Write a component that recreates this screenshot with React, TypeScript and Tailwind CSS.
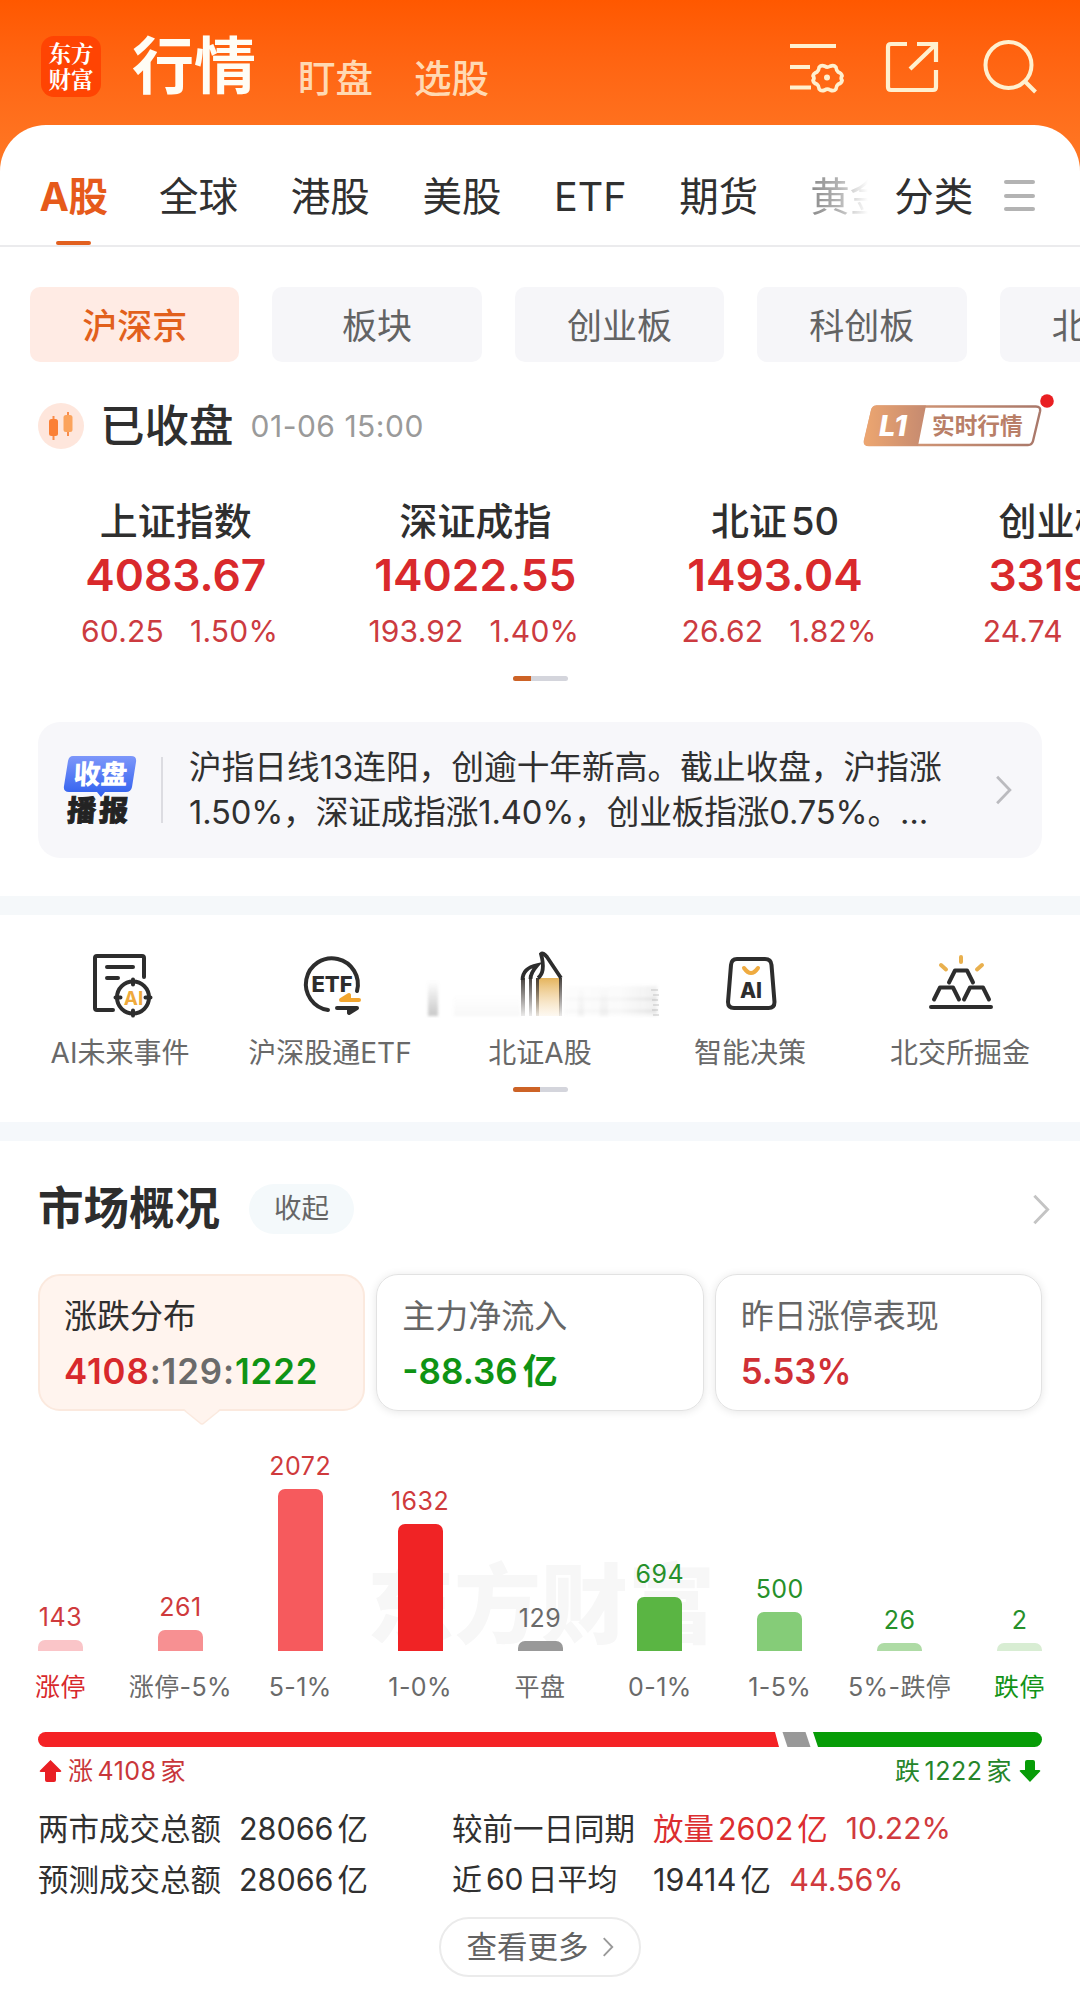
import React from 'react';

interface IndexQuote {
  name: React.ReactNode;
  price: string;
  change: string;
  percent: string;
}

interface DistributionBar {
  label: string;
  value: number;
  height: number;
  bar: string;
  text: string;
  labelText: string;
}

const tabs = ['全球', '港股', '美股', 'ETF', '期货'];
const boards = ['沪深京', '板块', '创业板', '科创板', '北交所'];

const quotes: IndexQuote[] = [
  { name: '上证指数', price: '4083.67', change: '60.25', percent: '1.50%' },
  { name: '深证成指', price: '14022.55', change: '193.92', percent: '1.40%' },
  {
    name: (
      <>
        北证<span className="ml-1">50</span>
      </>
    ),
    price: '1493.04',
    change: '26.62',
    percent: '1.82%',
  },
  { name: '创业板指', price: '3319.29', change: '24.74', percent: '0.75%' },
];

const distribution: DistributionBar[] = [
  { label: '涨停', value: 143, height: 11, bar: 'bg-[#fac5c8]', text: 'text-[#cf3a3c]', labelText: 'text-[#d8282c]' },
  { label: '涨停-5%', value: 261, height: 21, bar: 'bg-[#f79092]', text: 'text-[#cf3a3c]', labelText: 'text-[#6a6a6a]' },
  { label: '5-1%', value: 2072, height: 162, bar: 'bg-[#f65a5d]', text: 'text-[#cf3a3c]', labelText: 'text-[#6a6a6a]' },
  { label: '1-0%', value: 1632, height: 127, bar: 'bg-[#f02325]', text: 'text-[#cf3a3c]', labelText: 'text-[#6a6a6a]' },
  { label: '平盘', value: 129, height: 10, bar: 'bg-[#999999]', text: 'text-[#6a6a6a]', labelText: 'text-[#6a6a6a]' },
  { label: '0-1%', value: 694, height: 54, bar: 'bg-[#5ab543]', text: 'text-[#26902a]', labelText: 'text-[#6a6a6a]' },
  { label: '1-5%', value: 500, height: 39, bar: 'bg-[#85cc78]', text: 'text-[#26902a]', labelText: 'text-[#6a6a6a]' },
  { label: '5%-跌停', value: 26, height: 8, bar: 'bg-[#aedba5]', text: 'text-[#26902a]', labelText: 'text-[#6a6a6a]' },
  { label: '跌停', value: 2, height: 8, bar: 'bg-[#d8edd3]', text: 'text-[#26902a]', labelText: 'text-[#129317]' },
];

function Chevron({ className }: { className: string }) {
  return (
    <svg className={className} viewBox="0 0 16 28" fill="none" stroke="currentColor" strokeWidth="2.6">
      <path d="M2 1.5 14 14 2 26.5" />
    </svg>
  );
}

function Header() {
  return (
    <header className="flex h-[125px] items-start">
      <div className="ml-[41px] mt-9 flex h-[61px] w-[60px] flex-col items-center rounded-[13px] bg-[#ff4403] pt-[3px] font-['Noto_Serif_CJK_SC','Noto_Sans_CJK_SC',sans-serif] text-[22.500px] font-bold leading-[26px] text-white">
        <span>东方</span>
        <span>财富</span>
      </div>
      <h1 className="ml-[31px] mt-[33px] text-[62px] font-bold leading-[68px] text-[#fffdf5]">行情</h1>
      <span className="ml-[42px] mt-[55px] text-[37.500px] font-medium leading-[48px] text-[#ffd9b3]">盯盘</span>
      <span className="ml-[41px] mt-[55px] text-[37.500px] font-medium leading-[48px] text-[#ffd9b3]">选股</span>
      <div className="ml-auto mr-[42px] mt-[38px] flex">
        <svg className="mr-[40px] h-14 w-14" viewBox="0 0 56 56" fill="none" stroke="#fff0cf" strokeWidth="4">
          <path d="M2 8h46M2 29h20M2 49.500h21" />
          <path
            strokeWidth="4.200"
            strokeLinejoin="round"
            d="M34 27q2.500 2 6 0 4-2 6.500 1 .500 4 2.500 5.500 4 1.500 4.500 4.500-2 2.500 0 5-.500 3-4.500 4.500-2 1.500-2.500 5.500-2.500 3-6.500 1-3.500-2-6 0-4 2-6.500-1-.500-4-2.500-5.500-4-1.500-4.500-4.500 2-2.500 0-5 .500-3 4.500-4.500 2-1.500 2.500-5.500 2.500-3 6.500-1z"
            transform="translate(7 4.500) scale(.88)"
          />
          <circle cx="39" cy="39.500" r="3" fill="#fff0cf" stroke="none" />
        </svg>
        <svg className="mr-[42px] h-14 w-[56px]" viewBox="0 0 56 56" fill="none" stroke="#fff0cf" strokeWidth="4.200">
          <path d="M23 6H7q-3 0-3 3v40q0 3 3 3h42q3 0 3-3V32" />
          <path d="M33 6h19v18M51 7 26 31" />
        </svg>
        <svg className="h-14 w-14" viewBox="0 0 56 56" fill="none" stroke="#fff0cf" strokeWidth="4">
          <circle cx="26.500" cy="27" r="23" />
          <path d="m42.500 43 11 11" />
        </svg>
      </div>
    </header>
  );
}

function MarketTabs() {
  return (
    <nav className="flex h-[122px] border-b-2 border-[#ebebed] text-[39.500px] leading-[52px] text-[#303030]">
      <div className="ml-[39px] mt-[46px] flex w-[69px] flex-col items-center font-bold text-[#e65a1b]">
        <span className="text-[39.500px] tracking-[-0.500px]">A股</span>
        <span className="mt-[18px] h-[6px] w-[35px] rounded-full bg-[#e2601f]" />
      </div>
      <div className="ml-[51px] mt-[46px] flex gap-[52.700px]">
        {tabs.map((tab) => (
          <span key={tab}>{tab}</span>
        ))}
      </div>
      <div className="ml-[52px] mt-[46px] w-[58px] overflow-hidden whitespace-nowrap bg-linear-to-r from-[#8a8a8a] via-[#b4b4b4] to-white bg-clip-text text-transparent">
        黄金
      </div>
      <span className="ml-[26px] mt-[46px]">分类</span>
      <div className="ml-[31px] mt-[55px] flex flex-col gap-[9.500px]">
        <i className="h-[4px] w-[31px] rounded-full bg-[#b3b3b3]" />
        <i className="h-[4px] w-[31px] rounded-full bg-[#b3b3b3]" />
        <i className="h-[4px] w-[31px] rounded-full bg-[#b3b3b3]" />
      </div>
    </nav>
  );
}

function StatusRow() {
  return (
    <div className="mt-[35px] flex h-[58px] items-center">
      <svg className="ml-[38px] h-[46px] w-[46px]" viewBox="0 0 46 46">
        <circle cx="23" cy="23" r="23" fill="#fee6dc" />
        <path d="M15.500 13v24M30 9v24" stroke="#f98c4a" strokeWidth="2" />
        <rect x="11" y="16" width="9" height="17" rx="2.500" fill="#fb8035" />
        <rect x="25.500" y="12" width="9" height="17" rx="2.500" fill="#fba35c" />
      </svg>
      <h2 className="ml-[16px] text-[44.500px] font-medium leading-[58px] text-[#2f2f2f]">已收盘</h2>
      <span className="ml-[17px] text-[30px] tracking-[0.500px] text-[#9a9a9a]">01-06 15:00</span>
      <svg className="ml-auto mr-[24px] h-[58px] w-[200px] overflow-visible" viewBox="-6 0 200 58">
        <defs>
          <linearGradient id="l1" x1="0" x2="1">
            <stop offset="0" stopColor="#eda670" />
            <stop offset="1" stopColor="#c58a70" />
          </linearGradient>
          <linearGradient id="l1line" x1="0" x2="1">
            <stop offset="0" stopColor="#e0a078" />
            <stop offset="1" stopColor="#a9786a" />
          </linearGradient>
        </defs>
        <path d="M14 9.500H174q5 0 4 5L171 44q-1 4-5 4H7q-5 0-4-4.500L10 14q1-4.500 5-4.500Z" fill="#fff" stroke="url(#l1line)" strokeWidth="2.400" />
        <path d="M15 8.500H64L56 49H7q-6 0-5-5L9 13q1-4.500 6-4.500Z" fill="url(#l1)" />
        <text x="17" y="39" fontSize="29" fontWeight="800" fontStyle="italic" fill="#fff">
          L1
        </text>
        <text x="70" y="37" fontSize="22.700" fontWeight="700" fill="#b97f68">
          实时行情
        </text>
        <circle cx="185" cy="4" r="6.800" fill="#e91f22" />
      </svg>
    </div>
  );
}

function Pager({ active }: { active: string }) {
  return (
    <div className="mx-auto h-[5px] w-[55px] overflow-hidden rounded-full bg-[#d4d5dc]">
      <div className={`h-full bg-[#cd6326] ${active}`} />
    </div>
  );
}

function Quotes() {
  return (
    <div className="mt-[39px] flex pl-[26px]">
      {quotes.map((q) => (
        <div key={q.price} className="flex w-[299.600px] shrink-0 flex-col items-center whitespace-nowrap">
          <span className="text-[38px] font-medium leading-[54px] text-[#2f2f2f]">{q.name}</span>
          <span className="text-[44.300px] font-semibold leading-[54px] text-[#d9292c]">{q.price}</span>
          <div className="mt-[3px] flex w-full gap-[26px] text-[30px] leading-[52px] tracking-[0.200px] text-[#cc3b40]">
            <span className="w-[138px] text-right">{q.change}</span>
            <span>{q.percent}</span>
          </div>
        </div>
      ))}
    </div>
  );
}

function NewsCard() {
  return (
    <div className="mx-[38px] mt-[41px] flex h-[136px] items-center rounded-[22px] bg-[#f7f7fa]">
      <svg className="ml-[24px] h-[72px] w-[78px]" viewBox="0 0 78 72">
        <defs>
          <linearGradient id="news" x1="0" y1="0" x2="0" y2="1">
            <stop offset="0" stopColor="#7d97fa" />
            <stop offset="1" stopColor="#2f5fee" />
          </linearGradient>
        </defs>
        <path d="M11 2H69q6 0 5 6l-4 25q-1 5-6 5H43l-4 5-4-5H7q-6 0-5-6L6 7q1-5 5-5Z" fill="url(#news)" />
        <g fontWeight="900" textAnchor="middle">
          <text transform="translate(38 30) skewX(-3)" fontSize="27" fill="#fff">
            收盘
          </text>
          <text transform="translate(36.500 66.500) skewX(-4)" fontSize="29" letterSpacing="3" fill="#232323" stroke="#232323" strokeWidth="0.800">
            播报
          </text>
        </g>
      </svg>
      <div className="ml-[21px] h-[66px] w-[2px] bg-[#dcdce1]" />
      <p className="ml-[26px] whitespace-nowrap text-[32.700px] leading-[45px] text-[#303030]">
        沪指日线13连阳，创逾十年新高。截止收盘，沪指涨
        <br />
        <span className="tracking-[-0.150px]">1.50%，深证成指涨1.40%，创业板指涨0.75%。…</span>
      </p>
      <Chevron className="ml-auto mr-[30px] h-[30px] w-[17px] text-[#bbbbbf]" />
    </div>
  );
}

function EventIcon() {
  return (
    <svg className="h-[68px] w-[68px]" viewBox="0 0 68 68" fill="none" stroke="#2d2d2d" strokeWidth="4" strokeLinecap="round" strokeLinejoin="round">
      <path d="M27 60H11q-2 0-2-2V8q0-2 2-2h45q2 0 2 2v19M21 17h26M21 28h11" />
      <circle cx="47" cy="47.500" r="16" />
      <path d="M47 29.500v5M47 60.500v5M29.500 47.500h5M59.500 47.500h5" />
      <text x="47.500" y="54.500" textAnchor="middle" fontSize="19" fontWeight="700" fill="#efaa3c" stroke="none">
        AI
      </text>
    </svg>
  );
}

function EtfIcon() {
  return (
    <svg className="h-[68px] w-[68px]" viewBox="0 0 68 68" fill="none" stroke="#2d2d2d" strokeWidth="4" strokeLinecap="round" strokeLinejoin="round">
      <path d="M32 60A26 26 0 1 1 61 41" />
      <text x="36" y="41.500" textAnchor="middle" fontSize="22" fontWeight="800" fill="#2d2d2d" stroke="none">
        ETF
      </text>
      <path d="M45 50H63M45 50l8-5v5z" stroke="#f3a62f" />
      <path d="M41 58H61l-8 5v-5" />
    </svg>
  );
}

function BeijingIcon() {
  return (
    <svg className="h-[68px] w-[260px] shrink-0" viewBox="0 0 260 68" fill="none">
      <defs>
        <linearGradient id="gold" x1="0" y1="0" x2="0" y2="1">
          <stop offset="0" stopColor="#e5b45c" />
          <stop offset="1" stopColor="#f3d3a0" stopOpacity="0.150" />
        </linearGradient>
        <linearGradient id="ink" x1="0" y1="0" x2="0" y2="1">
          <stop offset="0" stopColor="#3a3430" />
          <stop offset="1" stopColor="#3a3430" stopOpacity="0.100" />
        </linearGradient>
        <linearGradient id="smear" x1="0" y1="0" x2="0" y2="1">
          <stop offset="0" stopColor="#9a9a9a" stopOpacity="0" />
          <stop offset="1" stopColor="#9a9a9a" stopOpacity="0.550" />
        </linearGradient>
        <linearGradient id="haze" x1="0" x2="1">
          <stop offset="0" stopColor="#d8d8d8" stopOpacity="0.200" />
          <stop offset="0.600" stopColor="#dddddd" stopOpacity="0.400" />
          <stop offset="1" stopColor="#c8c8c8" stopOpacity="0.800" />
        </linearGradient>
        <filter id="soft" x="-10%" y="-10%" width="120%" height="120%">
          <feGaussianBlur stdDeviation="1.500" />
        </filter>
      </defs>
      <g filter="url(#soft)">
        <rect x="18" y="31" width="10" height="35" fill="url(#smear)" />
        <path d="M44 46h66v20H44z" fill="url(#smear)" opacity="0.150" />
        <path d="M154 36h93v30h-93z" fill="url(#haze)" opacity="0.350" />
        <path d="M154 48h93v2h-93zM154 60h93v2h-93z" fill="url(#haze)" opacity="0.700" />
        <path d="M168 36h6v30h-6zM190 38h8v28h-8z" fill="url(#smear)" opacity="0.200" />
      </g>
      <path d="M241 40h7M243 45h6M242 50h6M243 55h6M242 60h6M243 65h6" stroke="#b5b5b5" strokeWidth="1.500" opacity="0.500" />
      <rect x="126" y="28" width="24" height="38" fill="url(#gold)" />
      <path d="M111 28h4v38h-4zM119 25h3v41h-3zM126 28h3v38h-3zM149 28h3v38h-3z" fill="url(#ink)" />
      <path d="M112.500 30q0-12 15-15-7 8-7 14M128 28q8-6 3-24 2-2 6 3l14 21" stroke="#2d2d2d" strokeWidth="3.800" />
    </svg>
  );
}

function DecisionIcon() {
  return (
    <svg className="h-[68px] w-[68px]" viewBox="0 0 68 68" fill="none" stroke="#2d2d2d" strokeWidth="4" strokeLinecap="round">
      <path d="M21 9H49q6 0 6.500 6l3 37q0 6-6 6H18q-6 0-6-6l3-37q.500-6 6-6Z" />
      <path d="M28 18q7 10 14 0" stroke="#efab40" />
      <text x="35" y="48" textAnchor="middle" fontSize="21" fontWeight="800" fill="#2d2d2d" stroke="none">
        AI
      </text>
    </svg>
  );
}

function GoldIcon() {
  return (
    <svg className="h-[68px] w-[68px]" viewBox="0 0 68 68" fill="none" stroke="#2d2d2d" strokeWidth="4" strokeLinecap="round" strokeLinejoin="round">
      <path d="M5 57h60M8 49.500l6-12h13l6 12M38 49.500l6-12h13l6 12M23 32.500l6-12h12l6 12" />
      <path d="M35 7v5M15 15l5 4.500M56 15l-5 4.500" stroke="#e9b04e" />
    </svg>
  );
}

const shortcuts = [
  { label: 'AI未来事件', icon: <EventIcon /> },
  { label: '沪深股通ETF', icon: <EtfIcon /> },
  { label: '北证A股', icon: <BeijingIcon /> },
  { label: '智能决策', icon: <DecisionIcon /> },
  { label: '北交所掘金', icon: <GoldIcon /> },
];

function Shortcuts() {
  return (
    <section className="h-[207px]">
      <div className="grid grid-cols-[repeat(5,210px)] pl-[15px] pt-[35px]">
        {shortcuts.map((s) => (
          <div key={s.label} className="flex flex-col items-center">
            <div className="flex h-[68px] w-full justify-center">{s.icon}</div>
            <span className="mt-[15px] whitespace-nowrap text-[28px] leading-[40px] text-[#696969]">{s.label}</span>
          </div>
        ))}
      </div>
      <div className="mt-[14px]">
        <Pager active="w-[27px]" />
      </div>
    </section>
  );
}

function OverviewCards() {
  return (
    <div className="mx-[38px] mt-[37px] grid h-[137px] grid-cols-3 gap-[11px] text-[33px]">
      <div className="relative rounded-[22px] border-2 border-[#fbe9de] bg-[#fff4ee] pl-[24px] pt-[17px]">
        <div className="leading-[46px] text-[#2f2f2f]">涨跌分布</div>
        <div className="mt-[9px] text-[34.800px] font-semibold leading-[46px] tracking-[0.900px] text-[#6b6b6b]">
          <span className="text-[#d8292c]">4108</span>:129:
          <span className="text-[#0f9314]">1222</span>
        </div>
        <svg className="absolute -bottom-[17px] left-[143px] h-[18px] w-[38px]" viewBox="0 0 38 18">
          <path d="M0 0h38L21 15q-2 2-4 0Z" fill="#fff4ee" />
          <path d="M1 2 17 15q2 2 4 0L37 2" fill="none" stroke="#fbe9de" strokeWidth="1.500" />
        </svg>
      </div>
      <div className="rounded-[22px] border border-[#e2e2e2] pl-[25px] pt-[18px] shadow-[0_1px_8px_rgba(0,0,0,0.1)]">
        <div className="leading-[46px] text-[#666666]">主力净流入</div>
        <div className="mt-[9px] text-[35px] font-semibold leading-[46px] text-[#0f9314]">
          -88.36<span className="ml-[5px]">亿</span>
        </div>
      </div>
      <div className="rounded-[22px] border border-[#e2e2e2] pl-[25px] pt-[18px] shadow-[0_1px_8px_rgba(0,0,0,0.1)]">
        <div className="leading-[46px] text-[#666666]">昨日涨停表现</div>
        <div className="mt-[9px] text-[34.800px] font-semibold leading-[46px] text-[#d03035]">5.53%</div>
      </div>
    </div>
  );
}

function DistributionChart() {
  return (
    <div className="relative">
      <div className="absolute left-[367px] top-[140px] text-[87px] font-black leading-[110px] text-[#f7f7f7]">东方财富</div>
      <div className="relative flex h-[293px] justify-between px-[38px]">
        {distribution.map((d) => (
          <div key={d.label} className="flex w-[45px] flex-col items-center justify-end whitespace-nowrap">
            <span className={`mb-[8px] text-[25px] leading-[30px] tracking-[0.500px] ${d.text}`}>{d.value}</span>
            <div className={`w-full shrink-0 rounded-t-[7px] ${d.bar}`} style={{ height: d.height }} />
            <span className={`mt-[19px] text-[25px] leading-[34px] tracking-[0.400px] ${d.labelText}`}>{d.label}</span>
          </div>
        ))}
      </div>
    </div>
  );
}

function Breadth() {
  return (
    <>
      <svg className="mx-[38px] mt-[28px] h-[15px] w-[1004px]" viewBox="0 0 1004 15">
        <path d="M7.500 0H737l4 15H7.500a7.500 7.500 0 0 1 0-15Z" fill="#f42225" />
        <path d="M744.500 0h23l5 15h-23Z" fill="#999999" />
        <path d="M775 0h221.500a7.500 7.500 0 0 1 0 15H780Z" fill="#079c07" />
      </svg>
      <div className="mx-[38px] mt-[7px] flex h-[34px] items-center justify-between text-[25px] leading-[34px] tracking-[0.500px]">
        <div className="flex items-center text-[#c9363a]">
          <svg className="mr-[6px] h-[24px] w-[24px]" viewBox="0 0 24 24" fill="#e91f24">
            <path d="M12.500 1 23 11.500q1 1.500-1 1.500h-4v8q0 2-2 2H9q-2 0-2-2v-8H3q-2 0-1-1.500Z" />
          </svg>
          涨<span className="mx-[4px]">4108</span>家
        </div>
        <div className="flex items-center text-[#26852a]">
          跌<span className="mx-[4px]">1222</span>家
          <svg className="ml-[6px] h-[24px] w-[24px]" viewBox="0 0 24 24" fill="#079c07">
            <path d="M12 23 2 12.500Q1 11 3 11h4V3q0-2 2-2h6q2 0 2 2v8h4q2 0 1 1.500Z" />
          </svg>
        </div>
      </div>
    </>
  );
}

function Turnover() {
  return (
    <div className="mx-[38px] mt-[15px] text-[30.500px] leading-[51px] text-[#303030]">
      <div className="flex">
        <span className="w-[201px]">两市成交总额</span>
        <span className="w-[213px]">
          28066<span className="ml-[4px]">亿</span>
        </span>
        <span className="w-[201px]">较前一日同期</span>
        <span className="mr-[18px] text-[#dc2d2f]">
          放量<span className="mx-[4px]">2602</span>亿
        </span>
        <span className="text-[30px] text-[#d03a3d]">10.22%</span>
      </div>
      <div className="flex">
        <span className="w-[201px]">预测成交总额</span>
        <span className="w-[213px]">
          28066<span className="ml-[4px]">亿</span>
        </span>
        <span className="w-[201px] text-[30px]">
          近<span className="mx-[4px]">60</span>日平均
        </span>
        <span className="mr-[18px] tracking-[0.200px]">
          19414<span className="ml-[4px]">亿</span>
        </span>
        <span className="text-[#d03a3d]">44.56%</span>
      </div>
    </div>
  );
}

export default function App() {
  return (
    <div className="h-[1999px] w-[1080px] overflow-hidden bg-white bg-linear-to-b from-[#ff5800] to-[#ff7a26] to-[180px] font-['Inter','Noto_Sans_CJK_SC',sans-serif]">
      <Header />
      <main className="h-[1874px] rounded-t-[46px] bg-white">
        <MarketTabs />

        <div className="ml-[30px] mt-[40px] flex gap-[33px] overflow-hidden">
          {boards.map((board, i) => (
            <div
              key={board}
              className={`flex h-[75px] w-[209.400px] shrink-0 items-center justify-center rounded-[10px] pt-[4px] text-[35px] ${
                i === 0 ? 'bg-[#ffebe4] font-medium text-[#e2601c]' : 'bg-[#f6f6f9] text-[#636363]'
              }`}
            >
              {board}
            </div>
          ))}
        </div>

        <StatusRow />
        <Quotes />
        <div className="mt-[19px]">
          <Pager active="w-[18px]" />
        </div>
        <NewsCard />

        <div className="mt-[38px] h-[19px] bg-[#f5f8fa]" />
        <Shortcuts />
        <div className="h-[19px] bg-[#f5f8fb]" />

        <section>
          <div className="mt-[40px] flex h-[56px] items-center pl-[38px] pr-[29px]">
            <h2 className="text-[45.500px] font-bold leading-[56px] text-[#2d2d2d]">市场概况</h2>
            <button className="ml-[29px] h-[50px] w-[105px] rounded-full bg-[#f4f9fb] text-[27.500px] text-[#666666]">收起</button>
            <Chevron className="ml-auto h-[31px] w-[20px] text-[#c4c4c4]" />
          </div>
          <OverviewCards />
          <DistributionChart />
          <Breadth />
          <Turnover />
          <button className="mx-auto mt-[12px] flex h-[60px] w-[202px] items-center justify-center rounded-full border-2 border-[#ebebeb] text-[30.500px] text-[#636363]">
            查看更多
            <Chevron className="ml-[13px] h-[20px] w-[12px] text-[#999999]" />
          </button>
        </section>
      </main>
    </div>
  );
}
